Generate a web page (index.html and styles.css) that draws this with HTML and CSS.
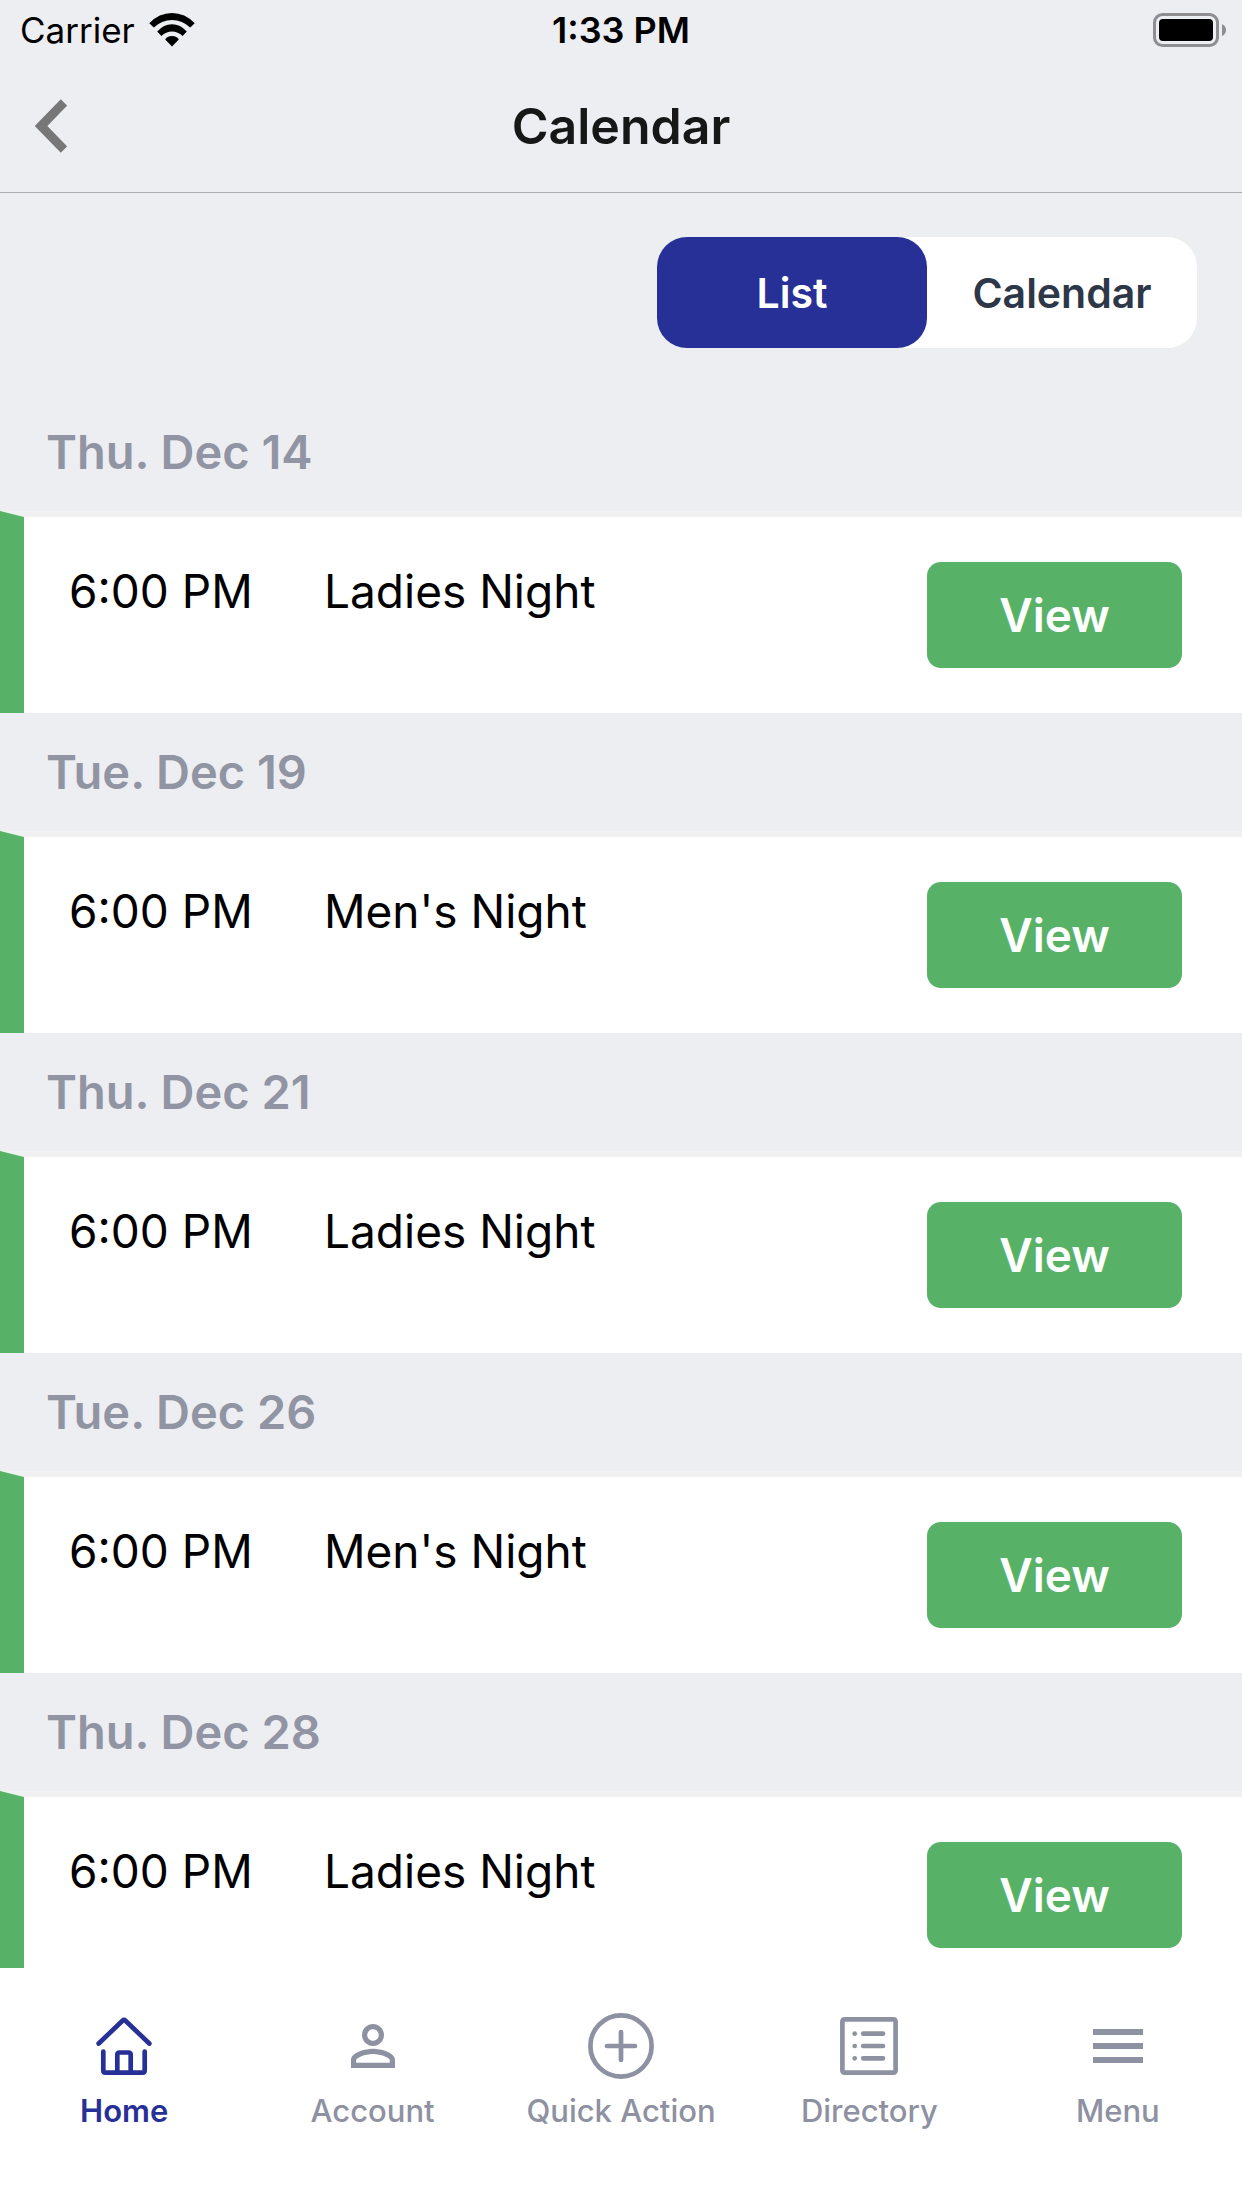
FILE: index.html
```html
<!DOCTYPE html>
<html lang="en">
<head>
<meta charset="utf-8">
<meta name="viewport" content="width=device-width, initial-scale=1">
<title>Calendar</title>
<link rel="stylesheet" href="styles.css">
</head>
<body>
<div class="status-bar">
  <div class="carrier">
    <span>Carrier</span>
    <svg class="wifi" viewBox="0 0 46 34" aria-hidden="true">
      <path d="M23 33.5 16.2 26.6Q17.8 23 23 23T29.8 26.6Z"/>
      <path d="M8.2 18.6Q14.500 11.200 23 11.200T37.800 18.600L33.600 23Q29 18.500 23 18.500T12.400 23Z"/>
      <path d="M.3 10.200Q10 0 23 0T45.700 10.200L41.200 14.600Q33.500 6.900 23 6.900T4.800 14.600Z"/>
    </svg>
  </div>
  <time class="clock">1:33 PM</time>
  <svg class="battery" viewBox="0 0 74 34" aria-hidden="true">
    <rect x="1.500" y="1.500" width="63" height="31" rx="8" fill="none" stroke="#8e8e91" stroke-width="3"/>
    <rect x="6" y="6" width="54" height="22" rx="4"/>
    <path d="M69 11Q73 13 73 17T69 23Z" fill="#8e8e91"/>
  </svg>
</div>
<header class="header">
  <button class="back" type="button" aria-label="Back">
    <svg viewBox="0 0 32 54" aria-hidden="true"><path d="M29 3.500 6 27 29 50.500"/></svg>
  </button>
  <h1 class="title">Calendar</h1>
</header>
<main class="content">
  <div class="segments" role="group" aria-label="View mode">
    <button class="segment segment-active" type="button" aria-pressed="true">List</button>
    <button class="segment" type="button" aria-pressed="false">Calendar</button>
  </div>
  <section>
    <h2 class="day">Thu. Dec 14</h2>
    <div class="event"><time class="event-time">6:00 PM</time><span class="event-name">Ladies Night</span><button class="view" type="button">View</button></div>
  </section>
  <section>
    <h2 class="day">Tue. Dec 19</h2>
    <div class="event"><time class="event-time">6:00 PM</time><span class="event-name">Men's Night</span><button class="view" type="button">View</button></div>
  </section>
  <section>
    <h2 class="day">Thu. Dec 21</h2>
    <div class="event"><time class="event-time">6:00 PM</time><span class="event-name">Ladies Night</span><button class="view" type="button">View</button></div>
  </section>
  <section>
    <h2 class="day">Tue. Dec 26</h2>
    <div class="event"><time class="event-time">6:00 PM</time><span class="event-name">Men's Night</span><button class="view" type="button">View</button></div>
  </section>
  <section>
    <h2 class="day">Thu. Dec 28</h2>
    <div class="event"><time class="event-time">6:00 PM</time><span class="event-name">Ladies Night</span><button class="view" type="button">View</button></div>
  </section>
</main>
<nav class="tabs">
  <a class="tab tab-active" href="#home" aria-current="page">
    <svg class="tab-icon" viewBox="0 0 72 72" aria-hidden="true"><path d="M10.700 33.500 34.500 10.700Q36 9.300 37.500 10.700L61.300 33.500M15.300 41.500V60.500Q15.300 62.700 17.500 62.700H54.500Q56.700 62.700 56.700 60.500V41.500M29.300 62.700V44.800Q29.300 42.500 31.600 42.500H40.400Q42.700 42.500 42.700 44.800V62.700"/></svg>
    <span>Home</span>
  </a>
  <a class="tab" href="#account">
    <svg class="tab-icon tab-icon-filled" viewBox="-1.100 -1.100 26.200 26.200" aria-hidden="true"><path d="M12 5.900c1.160 0 2.100.94 2.100 2.100s-.94 2.100-2.100 2.100S9.900 9.160 9.900 8s.94-2.100 2.100-2.100m0 9c2.970 0 6.100 1.460 6.100 2.100v1.100H5.900V17c0-.64 3.130-2.100 6.100-2.100M12 4C9.790 4 8 5.790 8 8s1.790 4 4 4 4-1.790 4-4-1.790-4-4-4zm0 9c-2.670 0-8 1.340-8 4v3h16v-3c0-2.660-5.330-4-8-4z"/></svg>
    <span>Account</span>
  </a>
  <a class="tab" href="#quick-action">
    <svg class="tab-icon" viewBox="0 0 72 72" aria-hidden="true"><circle cx="36" cy="36" r="30.600"/><path d="M22 36H50M36 22V50"/></svg>
    <span>Quick Action</span>
  </a>
  <a class="tab" href="#directory">
    <svg class="tab-icon" viewBox="0 0 72 72" aria-hidden="true"><rect x="9.400" y="9.400" width="53.200" height="53.200" rx="2"/><path d="M21.700 23.700h.01M21.700 36h.01M21.700 48.300h.01M30.200 23.700H50M30.200 36H50M30.200 48.300H50"/></svg>
    <span>Directory</span>
  </a>
  <a class="tab" href="#menu">
    <svg class="tab-icon tab-icon-filled" viewBox="0 0 72 72" aria-hidden="true"><path d="M11 19H61V25H11ZM11 33H61V39H11ZM11 47H61V53H11Z"/></svg>
    <span>Menu</span>
  </a>
</nav>
</body>
</html>
```
FILE: styles.css
```css
* {
  box-sizing: border-box;
}

body {
  display: flex;
  flex-direction: column;
  height: 100vh;
  margin: 0;
  background: #edeef2;
  color: #000;
  font-family: Inter, "Liberation Sans", sans-serif;
}

button {
  padding: 0;
  border: 0;
  background: none;
  font: inherit;
  cursor: pointer;
}

/* Status bar */
.status-bar {
  display: grid;
  grid-template-columns: 1fr auto 1fr;
  flex: none;
  align-items: center;
  height: 60px;
  padding: 0 15px;
  line-height: 60px;
}

.carrier {
  display: flex;
  align-items: center;
  gap: 14px;
  padding-left: 5px;
  font-size: 35px;
}

.wifi {
  width: 46px;
  height: 34px;
}

.clock {
  font-size: 36px;
  font-weight: 600;
}

.battery {
  justify-self: end;
  width: 74px;
  height: 34px;
}

/* Header */
.header {
  display: grid;
  grid-template-columns: 1fr auto 1fr;
  flex: none;
  align-items: center;
  height: 133px;
  padding: 0 35px;
  border-bottom: 1px solid #adadb1;
}

.back {
  justify-self: start;
  width: 32px;
  height: 54px;
}

.back svg {
  display: block;
  fill: none;
  stroke: #777;
  stroke-width: 9;
}

.title {
  margin: 0;
  color: #171717;
  font-size: 50px;
  font-weight: 600;
}

/* Event list */
.content {
  flex: 1;
  min-height: 0;
  overflow-y: auto;
  scrollbar-width: none;
}

.segments {
  display: flex;
  width: 540px;
  margin: 44px 45px 45px auto;
  border-radius: 30px;
  background: #fff;
}

.segment {
  flex: 1;
  height: 111px;
  border-radius: 30px;
  color: #2d3748;
  font-size: 41px;
  font-weight: 600;
}

.segment-active {
  background: #263097;
  color: #fff;
}

.day {
  margin: 0;
  padding: 30px 46px;
  color: #9194a3;
  font-size: 47px;
  font-weight: 600;
  line-height: 58px;
}

.event {
  display: flex;
  align-items: flex-start;
  padding: 45px 60px 45px 45px;
  border-top: 6px solid #f1f1f1;
  border-left: 24px solid #57b267;
  background: #fff;
  font-size: 46px;
  line-height: 58px;
}

.event-time {
  flex: none;
  width: 255px;
}

.event-name {
  flex: 1;
}

.view {
  width: 255px;
  height: 106px;
  border-radius: 14px;
  background: #57b267;
  color: #fff;
  font-weight: 600;
}

/* Bottom tabs */
.tabs {
  display: flex;
  flex: none;
  padding: 42px 0 79px;
  background: #fff;
}

.tab {
  display: flex;
  flex: 1 0 0;
  flex-direction: column;
  align-items: center;
  gap: 11px;
  color: #8e91a1;
  font-size: 31px;
  font-weight: 500;
  line-height: 36px;
  text-decoration: none;
}

.tab-active {
  color: #263097;
  font-weight: 600;
}

.tab-icon {
  width: 72px;
  height: 72px;
  fill: none;
  stroke: currentColor;
  stroke-width: 4.7;
  stroke-linecap: round;
}

.tab-icon-filled {
  fill: currentColor;
  stroke: none;
}
```
